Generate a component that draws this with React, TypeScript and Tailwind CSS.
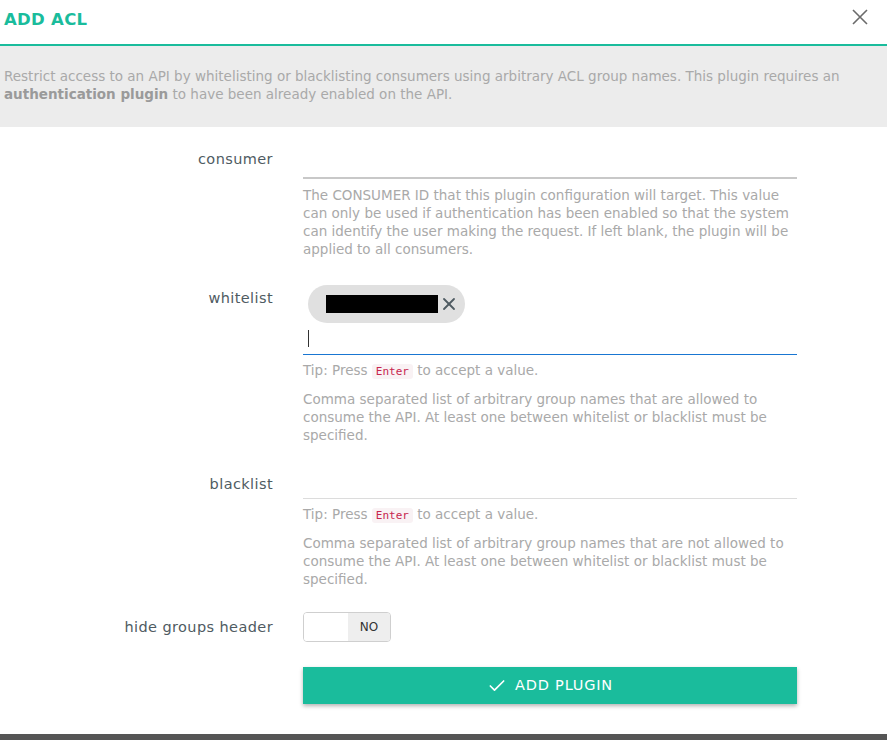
import { Check, X } from "lucide-react";

const font = { fontFamily: '"DejaVu Sans", "Open Sans", sans-serif' };

function Tip() {
	return (
		<p className="mt-[6px] text-[13.5px] leading-[18px] text-[#a9a9a9]">
			Tip: Press{" "}
			<code className="rounded-[3px] bg-[#f9f2f4] px-1 py-[1px] font-['DejaVu_Sans_Mono',monospace] text-[11px] text-[#c7254e]">
				Enter
			</code>{" "}
			to accept a value.
		</p>
	);
}

function Row({ label, children, labelClass = "pt-[9px]" }: { label: string; children: React.ReactNode; labelClass?: string }) {
	return (
		<div className="flex">
			<div className={`w-[273px] shrink-0 text-right text-[14.5px] leading-[18px] tracking-[0.4px] text-[#4f5b62] ${labelClass}`}>
				{label}
			</div>
			<div className="ml-[30px] w-[494px]">{children}</div>
		</div>
	);
}

export default function App() {
	return (
		<div className="min-h-[740px] w-[887px] bg-white" style={font}>
			<div className="flex h-[46px] items-center justify-between border-b-2 border-[#1abc9c] pl-[4px] pr-[19px]">
				<h1 className="-mt-[4px] text-[16.5px] font-bold tracking-[0.3px] text-[#1abc9c]">ADD ACL</h1>
				<svg width="16" height="16" viewBox="0 0 16 16" className="-mt-[10px]">
					<path d="M1 1 L15 15 M15 1 L1 15" stroke="#6b6b6b" strokeWidth="1.6" fill="none" />
				</svg>
			</div>
			<div className="h-[81px] bg-[#ececec] px-[4px] pt-[21px] text-[13.5px] leading-[18px] text-[#a9a9a9]">
				Restrict access to an API by whitelisting or blacklisting consumers using arbitrary ACL group names. This plugin requires an{" "}
				<b className="font-bold text-[#9a9a9a]">authentication plugin</b> to have been already enabled on the API.
			</div>

			<div className="flex flex-col pt-[20px]">
				<Row label="consumer" labelClass="pt-[3px]">
					<div className="h-[32px] border-b-2 border-[#c8c8c8]" />
					<p className="mt-[7px] text-[13.5px] leading-[18px] text-[#a9a9a9]">
						The CONSUMER ID that this plugin configuration will target. This value can only be used if authentication has been enabled so that the system can identify the user making the request. If left blank, the plugin will be applied to all consumers.
					</p>
				</Row>

				<div className="h-[27px]" />
				<Row label="whitelist" labelClass="pt-[4px]">
					<div className="border-b border-[#1976d2] pb-[7px] pl-[5px]">
						<div className="flex h-[38px] w-[157px] items-center rounded-full bg-[#e0e0e0] pl-[18px] pr-[6px]">
							<span className="h-[18px] w-[112px] bg-black" />
							<X size={20} strokeWidth={2.2} className="ml-[1px] text-[#4f5b62]" />
						</div>
						<div className="mt-[7px] h-[17px] w-[1px] bg-[#333]" />
					</div>
					<Tip />
					<p className="mt-[9px] text-[13.5px] leading-[18px] text-[#a9a9a9]">
						Comma separated list of arbitrary group names that are allowed to consume the API. At least one between whitelist or blacklist must be specified.
					</p>
				</Row>

				<div className="h-[31px]" />
				<Row label="blacklist" labelClass="pt-0">
					<div className="h-[24px] border-b border-[#dcdcdc]" />
					<Tip />
					<p className="mt-[9px] text-[13.5px] leading-[18px] text-[#a9a9a9]">
						Comma separated list of arbitrary group names that are not allowed to consume the API. At least one between whitelist or blacklist must be specified.
					</p>
				</Row>

				<div className="h-[24px]" />
				<Row label="hide groups header" labelClass="pt-[6px]">
					<div className="flex h-[30px] w-[88px] overflow-hidden rounded-[4px] border border-[#cfcfcf]">
						<div className="w-[44px] bg-white" />
						<div className="flex flex-1 items-center justify-center bg-[#eeeeee] text-[12px] text-[#333]">NO</div>
					</div>
				</Row>

				<div className="h-[25px]" />
				<Row label="">
					<button className="flex h-[37px] w-full items-center justify-center gap-[8px] bg-[#1abc9c] text-[14.5px] tracking-[0.8px] text-white shadow-[0_2px_4px_rgba(0,0,0,0.3)]">
						<Check size={20} strokeWidth={2} />
						ADD PLUGIN
					</button>
				</Row>
			</div>
			<div className="mt-[30px] h-[6px] bg-[#555555]" />
		</div>
	);
}
